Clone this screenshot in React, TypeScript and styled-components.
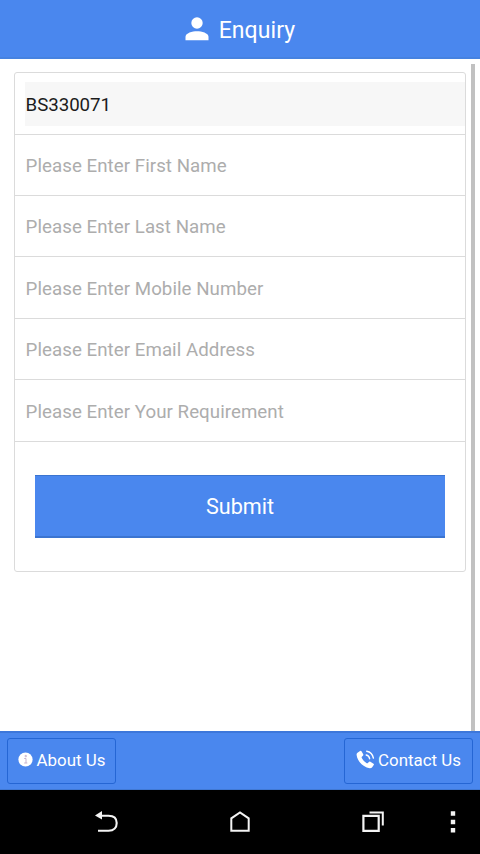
import React from "react";
import styled, { createGlobalStyle } from "styled-components";

const Global = createGlobalStyle`
  * { box-sizing: border-box; }
  body { margin: 0; background: #fff; font-family: Roboto, sans-serif; }
`;

const Screen = styled.div`
  width: 480px;
  height: 854px;
  display: flex;
  flex-direction: column;
  overflow: hidden;
`;

const Header = styled.header`
  flex: 0 0 59px;
  display: flex;
  align-items: center;
  justify-content: center;
  gap: 10px;
  background: #4a87ee;
  border-bottom: 2px solid #4682e0;
  color: #fff;
`;

const Title = styled.h1`
  margin: 0;
  font-size: 23px;
  font-weight: 400;
  line-height: 30px;
  padding-top: 4px;
  letter-spacing: 0.1px;
`;

const Content = styled.main`
  flex: 1;
  display: flex;
  align-items: flex-start;
  justify-content: space-between;
  padding: 5px 5px 0 14px;
`;

const Card = styled.form`
  width: 452px;
  height: 500px;
  margin-top: 8px;
  border: 1px solid #dbdbdb;
  border-radius: 3px;
  display: flex;
  flex-direction: column;
`;

const Scrollbar = styled.div`
  width: 4px;
  align-self: stretch;
  background: #c1c1c1;
`;

const Row = styled.label<{ $first?: boolean }>`
  height: ${(p) => (p.$first ? 61.6 : 61.4)}px;
  padding: 9px 0 8px 10px;
  border-bottom: 1px solid #dbdbdb;
  display: flex;
`;

const Field = styled.input<{ $filled?: boolean }>`
  flex: 1;
  min-width: 0;
  border: 0;
  outline: 0;
  padding: ${(p) => (p.$filled ? "3px" : "1.5px")} 0 0 0.6px;
  background: ${(p) => (p.$filled ? "#f7f7f7" : "transparent")};
  color: #1c1c1c;
  font-family: Roboto, sans-serif;
  font-size: 18.7px;
  letter-spacing: ${(p) => (p.$filled ? "-0.05px" : "0.05px")};
  &::placeholder { color: #adadad; opacity: 1; }
`;

const Submit = styled.button`
  height: 63px;
  margin: 33.4px 20px 0 20px;
  padding: 1px 0 0;
  border: 1px solid #3b74d0;
  border-width: 1px 0 2px;
  background: #4a87ee;
  color: #fff;
  font-family: Roboto, sans-serif;
  font-size: 21.6px;
`;

const Footer = styled.footer`
  flex: 0 0 59px;
  display: flex;
  align-items: center;
  justify-content: space-between;
  padding: 0 7px 0 7px;
  background: #4a87ee;
  border-top: 2px solid #3d77da;
  border-bottom: 1px solid #4179d4;
`;

const FooterButton = styled.button<{ $width: number; $gap: number }>`
  width: ${(p) => p.$width}px;
  height: 46px;
  padding: 0 0 3px;
  display: flex;
  align-items: center;
  justify-content: center;
  gap: ${(p) => p.$gap}px;
  border: 1px solid #2566d4;
  border-radius: 3px;
  background: #4a87ee;
  color: #fff;
  font-family: Roboto, sans-serif;
  font-size: 16.9px;
`;

const SystemBar = styled.nav`
  flex: 0 0 64px;
  display: flex;
  align-items: center;
  background: #000;
  padding-left: 94px;
`;

const NavSlot = styled.span<{ $gap: number }>`
  display: flex;
  margin-right: ${(p) => p.$gap}px;
`;

const PersonIcon = () => (
  <svg width="24" height="24" viewBox="0 0 24 24" fill="#fff">
    <circle cx="12" cy="6" r="5.7" />
    <path d="M0.5 23.2V19.7C0.5 16 7.4 14.2 12 14.2S23.5 16 23.5 19.7V23.2Z" />
  </svg>
);

const InfoIcon = () => (
  <svg width="15" height="15" viewBox="0 0 15 15">
    <circle cx="7.5" cy="7.5" r="7.1" fill="#fff" />
    <path d="M6.2 6.5H8V11M6.2 11H9.3M7.2 3.4H8.3V4.8H7.2Z" fill="none" stroke="#c8b5cf" strokeWidth="1" />
  </svg>
);

const PhoneIcon = () => (
  <svg width="19" height="19" viewBox="0 0 19 19">
    <path
      d="M1.5 2.7 4 .9Q4.9.4 5.5 1.2L7.2 4.3Q7.6 5.1 6.9 5.7L5.8 6.7Q5.4 7.2 5.8 8C7 10.2 8.5 11.8 10.7 13.2Q11.4 13.5 11.9 13L13.1 11.8Q13.7 11.3 14.4 11.7L17.5 13.7Q18.3 14.3 17.7 15.1L16 17.4Q15.2 18.3 13.7 18.2C7.1 17.3 1.4 11.4.6 5Q.4 3.5 1.5 2.7Z"
      fill="#fff"
    />
    <path d="M10.2 5Q13.2 5.7 13.6 8.7M10.7 1.2Q16.3 2.2 17.4 8.1" fill="none" stroke="#fff" strokeWidth="1.4" strokeLinecap="round" />
  </svg>
);

const BackIcon = () => (
  <svg width="25" height="24" viewBox="0 0 25 24">
    <path d="M7 5.7H14.5C20 5.7 22.7 8.6 22.7 13S20 20.8 14.5 20.8H4" fill="none" stroke="#f4f4f4" strokeWidth="2.1" />
    <path d="M1 5.4 8 1V9.5Z" fill="#f4f4f4" />
  </svg>
);

const HomeIcon = () => (
  <svg width="22" height="24" viewBox="0 0 22 24">
    <path d="M2.3 20.8V8.3L11 2.4 19.7 8.3V20.8Z" fill="none" stroke="#f4f4f4" strokeWidth="2" />
  </svg>
);

const RecentIcon = () => (
  <svg width="24" height="24" viewBox="0 0 24 24" fill="none" stroke="#f4f4f4">
    <path d="M2.4 5.8H17.7V20.8H2.4Z" strokeWidth="2.2" />
    <path d="M8.5 2.5H21.8V15.5" strokeWidth="2" />
  </svg>
);

const MenuIcon = () => (
  <svg width="6" height="24" viewBox="0 0 6 24" fill="#f4f4f4">
    <path d="M.8 1.3h4.4v4.4H.8ZM.8 9.8h4.4v4.4H.8ZM.8 18h4.4v4.4H.8Z" />
  </svg>
);

const placeholders = [
  "Please Enter First Name",
  "Please Enter Last Name",
  "Please Enter Mobile Number",
  "Please Enter Email Address",
  "Please Enter Your Requirement",
];

export default function App() {
  return (
    <>
      <Global />
      <Screen>
        <Header>
          <PersonIcon />
          <Title>Enquiry</Title>
        </Header>
        <Content>
          <Card onSubmit={(e) => e.preventDefault()}>
            <Row $first>
              <Field $filled readOnly value="BS330071" />
            </Row>
            {placeholders.map((text) => (
              <Row key={text}>
                <Field placeholder={text} />
              </Row>
            ))}
            <Submit type="submit">Submit</Submit>
          </Card>
          <Scrollbar />
        </Content>
        <Footer>
          <FooterButton $width={109} $gap={4}>
            <InfoIcon />
            About Us
          </FooterButton>
          <FooterButton $width={129} $gap={3}>
            <PhoneIcon />
            Contact Us
          </FooterButton>
        </Footer>
        <SystemBar>
          <NavSlot $gap={110}><BackIcon /></NavSlot>
          <NavSlot $gap={110}><HomeIcon /></NavSlot>
          <NavSlot $gap={65}><RecentIcon /></NavSlot>
          <NavSlot $gap={0}><MenuIcon /></NavSlot>
        </SystemBar>
      </Screen>
    </>
  );
}
